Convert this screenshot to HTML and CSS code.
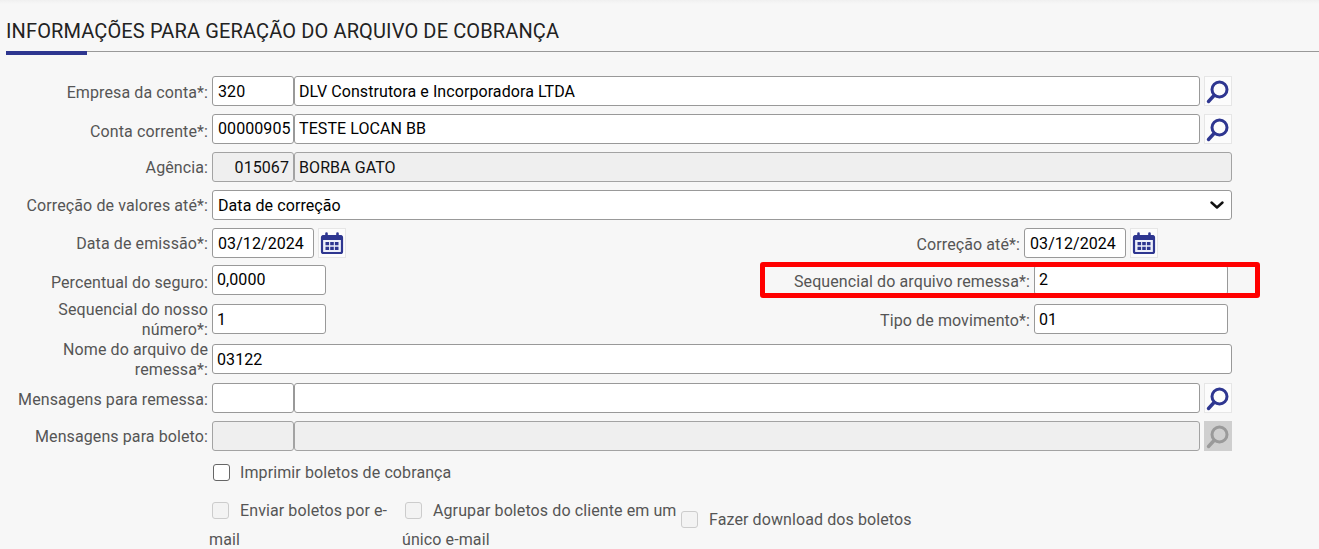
FILE: index.html
```html
<!DOCTYPE html>
<html lang="pt-BR">
<head>
<meta charset="utf-8">
<title>Informações para geração do arquivo de cobrança</title>
<link rel="stylesheet" href="styles.css">
</head>
<body>
<svg class="sprites" width="0" height="0" aria-hidden="true">
  <symbol id="lupa" viewBox="0 0 28 30">
    <circle cx="15.500" cy="13.500" r="7.500" fill="none" stroke="currentColor" stroke-width="3"/>
    <path d="M10 19.500 4.500 25.500" fill="none" stroke="currentColor" stroke-width="3.400" stroke-linecap="round"/>
  </symbol>
  <symbol id="cal" viewBox="0 0 28 30">
    <rect x="4" y="8" width="20" height="17" rx="1.500" fill="#eef0fa" stroke="currentColor" stroke-width="2.200"/>
    <path d="M4 7.500h20v4.500H4z" fill="currentColor"/>
    <path d="M8.500 5.500v3M19.500 5.500v3" stroke="currentColor" stroke-width="2.600" stroke-linecap="round"/>
    <path d="M7.500 14h3.600v3.200H7.500zM12.200 14h3.600v3.200h-3.600zM16.900 14h3.600v3.200h-3.600zM7.500 18.800h3.600V22H7.500zM12.200 18.800h3.600V22h-3.600zM16.900 18.800h3.600V22h-3.600z" fill="currentColor"/>
  </symbol>
</svg>
<div class="topstrip"></div>
<main class="page">
  <h1 class="title">INFORMAÇÕES PARA GERAÇÃO DO ARQUIVO DE COBRANÇA</h1>
  <form class="form">
    <div class="row r-first">
      <label class="lbl low1">Empresa da conta*:</label>
      <input class="inp code" value="320"><input class="inp grow" value="DLV Construtora e Incorporadora LTDA">
      <button type="button" class="ico"><svg><use href="#lupa"/></svg></button>
    </div>
    <div class="row r8 low">
      <label class="lbl low2">Conta corrente*:</label>
      <input class="inp code" value="00000905"><input class="inp grow" value="TESTE LOCAN BB">
      <button type="button" class="ico"><svg><use href="#lupa"/></svg></button>
    </div>
    <div class="row r8">
      <label class="lbl">Agência:</label>
      <input class="inp code right" disabled value="015067"><input class="inp grow" disabled value="BORBA GATO">
    </div>
    <div class="row r8">
      <label class="lbl">Correção de valores até*:</label>
      <div class="selwrap">
        <select class="inp sel"><option>Data de correção</option></select>
        <svg class="chev" viewBox="0 0 14 8" aria-hidden="true"><path d="M1.500 1.500 7 6.500l5.500-5" fill="none" stroke="#111" stroke-width="2.400" stroke-linecap="round" stroke-linejoin="round"/></svg>
      </div>
    </div>
    <div class="row r8">
      <label class="lbl">Data de emissão*:</label>
      <input class="inp date" value="03/12/2024">
      <button type="button" class="ico"><svg><use href="#cal"/></svg></button>
      <div class="side side-date">
        <label class="lbl-side">Correção até*:</label>
        <input class="inp date" value="03/12/2024">
        <button type="button" class="ico"><svg><use href="#cal"/></svg></button>
      </div>
    </div>
    <div class="row r7 low">
      <label class="lbl low2">Percentual do seguro:</label>
      <input class="inp mid" value="0,0000">
      <div class="side side-wide">
        <label class="lbl-side">Sequencial do arquivo remessa*:</label>
        <input class="inp wide" value="2">
        <div class="flag" aria-hidden="true"></div>
      </div>
    </div>
    <div class="row r9">
      <label class="lbl tight">Sequencial do nosso número*:</label>
      <input class="inp mid" value="1">
      <div class="side side-wide">
        <label class="lbl-side">Tipo de movimento*:</label>
        <input class="inp wide" value="01">
      </div>
    </div>
    <div class="row r10">
      <label class="lbl tight">Nome do arquivo de remessa*:</label>
      <input class="inp grow" value="03122">
    </div>
    <div class="row r9">
      <label class="lbl low1">Mensagens para remessa:</label>
      <input class="inp code"><input class="inp grow">
      <button type="button" class="ico"><svg><use href="#lupa"/></svg></button>
    </div>
    <div class="row r8">
      <label class="lbl">Mensagens para boleto:</label>
      <input class="inp code" disabled><input class="inp grow" disabled>
      <button type="button" class="ico off"><svg><use href="#lupa"/></svg></button>
    </div>
    <div class="check-one">
      <span class="box"></span><span class="ctext">Imprimir boletos de cobrança</span>
    </div>
    <div class="check-row">
      <div class="chk c1"><span class="box dis"></span><span class="ctext">Enviar boletos por e-mail</span></div>
      <div class="chk c2"><span class="box dis"></span><span class="ctext">Agrupar boletos do cliente em um único e-mail</span></div>
      <div class="chk c3"><span class="box dis"></span><span class="ctext">Fazer download dos boletos</span></div>
    </div>
  </form>
</main>
</body>
</html>
```
FILE: styles.css
```css
* { box-sizing: border-box; }
html, body { margin: 0; padding: 0; }
body {
  background: #f7f7f7;
  font-family: Roboto, "Liberation Sans", sans-serif;
  font-size: 16px;
  letter-spacing: 0.1px;
  color: #555;
  height: 549px;
  overflow: hidden;
  position: relative;
}
.sprites { position: absolute; }
.topstrip { height: 4px; background: linear-gradient(#f0f0f0, #f7f7f7); }
.page { padding: 0 0 0 6px; }
.title {
  margin: 0;
  padding: 15px 0 0;
  height: 48px;
  font-size: 20px;
  font-weight: 400;
  letter-spacing: 0.13px;
  line-height: 24px;
  color: #222;
  border-bottom: 1px solid #999;
  position: relative;
}
.title::after {
  content: "";
  position: absolute;
  left: 0;
  bottom: -4px;
  width: 81px;
  height: 4px;
  background: #2e3690;
}
.form { width: 1226px; padding-top: 24px; }
.row { display: flex; align-items: center; height: 30px; }
.r8 { margin-top: 8px; }
.r7 { margin-top: 7px; }
.r9 { margin-top: 9px; }
.r10 { margin-top: 10px; }
.lbl {
  flex: 0 0 202px;
  margin-right: 4px;
  padding-top: 2px;
  text-align: right;
  line-height: 20px;
}
.lbl.low1 { padding-top: 4px; }
.lbl.low2 { padding-top: 6px; }
.lbl.tight { padding-top: 1px; }
.inp {
  height: 30px;
  border: 1px solid #999;
  border-radius: 3px;
  background: #fff;
  padding: 1px 4px 0 5px;
  font: 16px Roboto, "Liberation Sans", sans-serif;
  letter-spacing: 0.08px;
  color: #000;
  outline: none;
  min-width: 0;
}
.low .inp { padding-top: 0; padding-bottom: 1px; }
.inp:disabled { background: #efefef; color: #111; border-color: #a3a3a3; opacity: 1; }
.code { flex: 0 0 82px; width: 82px; padding-right: 0; }
.right { text-align: right; padding-right: 4px; }
.grow { flex: 1 1 0; width: 0; padding-left: 4px; }
.date { flex: 0 0 102px; width: 102px; }
.mid { flex: 0 0 114px; width: 114px; padding-left: 4px; }
.wide { flex: 0 0 194px; width: 194px; padding-left: 4px; }
.selwrap { flex: 1 1 0; position: relative; height: 30px; }
.sel { width: 100%; appearance: none; -webkit-appearance: none; padding-left: 5px; }
.chev {
  position: absolute;
  right: 8px;
  top: 11px;
  width: 14px;
  height: 8px;
  pointer-events: none;
}
.ico {
  flex: 0 0 28px;
  width: 28px;
  height: 30px;
  margin-left: 4px;
  padding: 0;
  border: 1px solid #e6e6e6;
  background: #fcfcfc;
  color: #2e3690;
}
.ico svg { width: 28px; height: 30px; margin: -1px; display: block; }
.ico.off { background: #cfcfcf; border-color: #cfcfcf; color: #9a9a9a; }
.side { display: flex; align-items: center; margin-left: auto; }
.side .lbl-side { padding-top: 2px; }
.side-date { margin-right: 74px; }
.side-wide { margin-right: 4px; position: relative; }
.lbl-side { margin-right: 4px; text-align: right; }
.flag {
  position: absolute;
  width: 500px;
  right: -32px;
  top: -3px;
  bottom: -3px;
  border: 5px solid #f00;
  border-radius: 3px;
  pointer-events: none;
}
.check-one {
  display: flex;
  align-items: center;
  margin: 9px 0 0 207px;
  height: 24px;
}
.box {
  flex: 0 0 17px;
  width: 17px;
  height: 17px;
  border: 1px solid #666;
  border-radius: 3px;
  background: #fff;
  margin-right: 10px;
  display: inline-block;
  vertical-align: -3px;
}
.box.dis { border-color: #ccc; background: #f3f3f3; margin-right: 11px; }
.check-row {
  display: flex;
  align-items: center;
  margin: 12px 0 0 203px;
  line-height: 29px;
}
.chk .box { margin-left: 3px; }
.c1 { width: 193px; }
.c2 { width: 279px; }
.c3 { white-space: nowrap; margin-top: -11px; }
.c3 .box { margin-left: 0; }
```
